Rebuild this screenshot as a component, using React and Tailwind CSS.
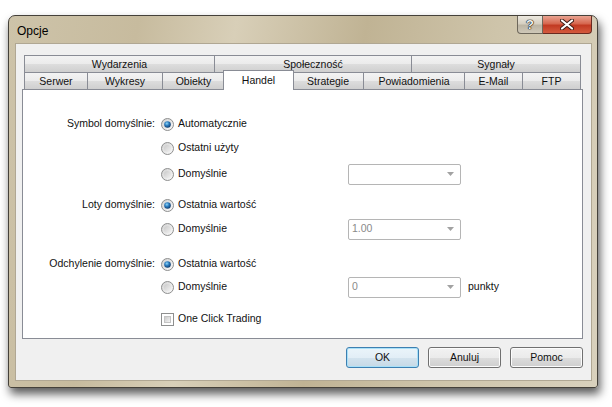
import React from 'react';

const font = { fontFamily: '"Liberation Sans", Arial, sans-serif' };

const Radio = ({ checked }) => (
  <svg width="13" height="13" viewBox="0 0 13 13" className="shrink-0">
    <defs>
      <linearGradient id="rOuter" x1="0" y1="0" x2="1" y2="1">
        <stop offset="0" stopColor="#d0d0d0" />
        <stop offset="1" stopColor="#fcfcfc" />
      </linearGradient>
      <radialGradient id="rOn" cx="0.4" cy="0.35" r="0.7">
        <stop offset="0" stopColor="#8fd6f7" />
        <stop offset="0.45" stopColor="#2c7dc0" />
        <stop offset="1" stopColor="#0d3463" />
      </radialGradient>
      <linearGradient id="rOff" x1="0" y1="0" x2="1" y2="1">
        <stop offset="0" stopColor="#c9c9c9" />
        <stop offset="1" stopColor="#f2f2f2" />
      </linearGradient>
    </defs>
    <circle cx="6.5" cy="6.5" r="6" fill="url(#rOuter)" stroke="#8e8f8f" />
    <circle cx="6.5" cy="6.5" r={checked ? 3.3 : 3.6} fill={checked ? 'url(#rOn)' : 'url(#rOff)'} />
  </svg>
);

const Checkbox = () => (
  <div className="w-[13px] h-[13px] shrink-0 border border-[#8e8f8f] bg-white p-[2px]">
    <div className="w-full h-full bg-[linear-gradient(135deg,#cbcbcb,#f4f4f4)] border border-[#c4c4c4]" />
  </div>
);

const Combo = ({ value }) => (
  <div className="w-[113px] h-[21px] shrink-0 border border-[#b5b5b5] rounded-[2px] bg-white flex items-center justify-between pl-[3px] pr-[6px]">
    <span className="text-[10.5px] text-[#8a8a8a]">{value}</span>
    <svg width="7" height="4" viewBox="0 0 7 4">
      <path d="M0 0 L7 0 L3.5 4 Z" fill="#a2a2a2" />
    </svg>
  </div>
);

const Row = ({ label, mt, children, combo, suffix }) => (
  <div className="flex items-center h-[22px]" style={{ marginTop: mt }}>
    <div className="w-[132px] text-right text-[10.5px] text-[#111]">{label}</div>
    <div className="w-[187px] ml-[6px] flex items-center gap-[4px] text-[10.5px] text-[#111]">{children}</div>
    {combo !== undefined && <Combo value={combo} />}
    {suffix && <span className="ml-[7px] text-[10.5px] text-[#111]">{suffix}</span>}
  </div>
);

const Tab = ({ label, w, selected, last }) => (
  <div
    className={`relative h-full flex items-center justify-center border-t border-l border-[#898c95] text-[10.5px] text-[#111] bg-[linear-gradient(#f3f3f3,#ebebeb_50%,#dddddd_51%,#cfcfcf)] ${last ? 'border-r' : ''}`}
    style={{ width: w }}
  >
    {selected ? (
      <div className="absolute -left-[2px] -right-[2px] -top-[3px] -bottom-[1px] z-10 bg-white border-t border-l border-r border-[#898c95] flex items-start justify-center pt-[2px]">
        {label}
      </div>
    ) : (
      <span className="pt-[1px]">{label}</span>
    )}
  </div>
);

const Button = ({ children, primary }) => (
  <div
    className={`w-[73px] h-[21px] rounded-[3px] border flex items-center justify-center text-[10.5px] text-[#111] ${
      primary
        ? 'border-[#3c7fb1] bg-[linear-gradient(#eaf4fa,#e2eef6_50%,#d3e3ee_51%,#c6d9e6)] shadow-[inset_0_0_0_1px_#a8e0f8]'
        : 'border-[#707070] bg-[linear-gradient(#f2f2f2,#ebebeb_50%,#dddddd_51%,#cfcfcf)] shadow-[inset_0_0_0_1px_#fcfcfc]'
    }`}
  >
    {children}
  </div>
);

export default function App() {
  return (
    <div className="w-[612px] h-[407px] bg-white overflow-hidden pt-[15px] pl-[8px]" style={font}>
      <div className="w-[590px] h-[373px] rounded-t-[7px] rounded-b-[3px] border border-[#45413a] bg-[linear-gradient(100deg,#cdc3a9,#c7bb9e_20%,#d8cfb8_35%,#c0b394_55%,#cec4aa_75%,#d9d1bd)] shadow-[2px_6px_10px_rgba(0,0,0,0.65)] flex flex-col">
        <div className="h-[27px] shrink-0 flex items-start justify-between pl-[8px] pr-[5px]">
          <span className="mt-[6px] text-[12px] text-black">Opcje</span>
          <div className="flex">
            <div className="w-[26px] h-[18px] rounded-bl-[4px] border border-t-0 border-[#6d675b] bg-[linear-gradient(#ece8df,#d6d0c2_45%,#bcb5a4_55%,#cfc8b8)] flex items-center justify-center">
              <span className="text-[13px] font-bold text-[#f4f4f4] leading-none [text-shadow:0_0_1px_#000,0_0_1px_#000,0_0_1px_#000]">?</span>
            </div>
            <div className="w-[49px] h-[18px] rounded-br-[4px] border border-t-0 border-l-0 border-[#6a2a20] bg-[linear-gradient(#e9a391,#d6674f_45%,#c23a22_55%,#d45a3e)] flex items-center justify-center">
              <svg width="14" height="11" viewBox="0 0 14 11">
                <path d="M2 1.5 L12 9.5 M12 1.5 L2 9.5" stroke="#3a1a14" strokeWidth="4" strokeLinecap="round" />
                <path d="M2 1.5 L12 9.5 M12 1.5 L2 9.5" stroke="#ffffff" strokeWidth="2.2" strokeLinecap="round" />
              </svg>
            </div>
          </div>
        </div>
        <div className="ml-[6px] w-[577px] h-[338px] bg-[#f0f0f0] border border-[#b0a793] flex flex-col pt-[11px] pl-[6px]">
          <div className="w-[561px] px-[2px] flex flex-col">
            <div className="flex h-[17px]">
              <Tab label="Wydarzenia" w={190} />
              <Tab label="Społeczność" w={197} />
              <Tab label="Sygnały" w={170} last />
            </div>
            <div className="flex h-[17px]">
              <Tab label="Serwer" w={63} />
              <Tab label="Wykresy" w={75} />
              <Tab label="Obiekty" w={62} />
              <Tab label="Handel" w={68} selected />
              <Tab label="Strategie" w={71} />
              <Tab label="Powiadomienia" w={101} />
              <Tab label="E-Mail" w={58} />
              <Tab label="FTP" w={59} last />
            </div>
          </div>
          <div className="w-[561px] h-[250px] border border-[#898c95] bg-white flex flex-col">
            <Row label="Symbol domyślnie:" mt={23}>
              <Radio checked />
              <span>Automatycznie</span>
            </Row>
            <Row mt={2}>
              <Radio />
              <span>Ostatni użyty</span>
            </Row>
            <Row mt={4} combo="">
              <Radio />
              <span>Domyślnie</span>
            </Row>
            <Row label="Loty domyślnie:" mt={9}>
              <Radio checked />
              <span>Ostatnia wartość</span>
            </Row>
            <Row mt={2} combo="1.00">
              <Radio />
              <span>Domyślnie</span>
            </Row>
            <Row label="Odchylenie domyślnie:" mt={13}>
              <Radio checked />
              <span>Ostatnia wartość</span>
            </Row>
            <Row mt={1} combo="0" suffix="punkty">
              <Radio />
              <span>Domyślnie</span>
            </Row>
            <Row mt={10}>
              <Checkbox />
              <span>One Click Trading</span>
            </Row>
          </div>
          <div className="w-[561px] mt-[8px] flex justify-end gap-[9px]">
            <Button primary>OK</Button>
            <Button>Anuluj</Button>
            <Button>Pomoc</Button>
          </div>
        </div>
      </div>
    </div>
  );
}
